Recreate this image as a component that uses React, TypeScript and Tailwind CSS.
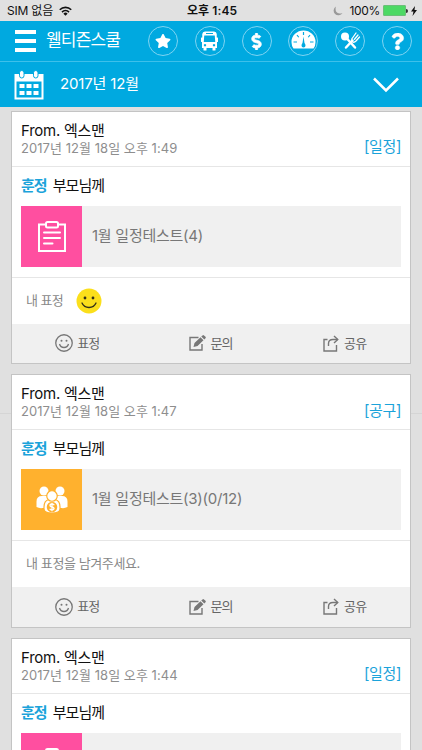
import type { ReactNode } from 'react';
import { FaDollarSign, FaQuestion, FaStar } from 'react-icons/fa';

type Post = {
  id: number;
  date: string;
  category: string;
  title: string;
  kind: 'schedule' | 'group';
  reacted: boolean;
};

const POSTS: Post[] = [
  { id: 1, date: '2017년 12월 18일 오후 1:49', category: '[일정]', title: '1월 일정테스트(4)', kind: 'schedule', reacted: true },
  { id: 2, date: '2017년 12월 18일 오후 1:47', category: '[공구]', title: '1월 일정테스트(3)(0/12)', kind: 'group', reacted: false },
  { id: 3, date: '2017년 12월 18일 오후 1:44', category: '[일정]', title: '', kind: 'schedule', reacted: false },
];

function WifiIcon() {
  return (
    <svg className="ml-1.5 h-[10px] w-[13px]" viewBox="0 0 26 20" fill="none" stroke="#111" strokeWidth="3.2">
      <path d="M1.500 7.500a16.500 16.500 0 0 1 23 0" />
      <path d="M6 12.200a10 10 0 0 1 14 0" />
      <path d="M13 19.500l-4.200-4.200a6 6 0 0 1 8.400 0z" fill="#111" stroke="none" />
    </svg>
  );
}

function BusIcon() {
  return (
    <svg className="h-[20px] w-[17px]" viewBox="0 0 34 40">
      <path
        fill="#fff"
        fillRule="evenodd"
        d="M8 1h18q5 0 5.500 5v7h1.500q1 0 1 1v7q0 1-1 1h-1v12h-3v4q0 1-1 1h-4q-1 0-1-1v-4H11v4q0 1-1 1H6q-1 0-1-1v-4H2V22H1q-1 0-1-1v-7q0-1 1-1h1.500V6Q3 1 8 1zM10 4v2h14V4zM6.500 9l-1 13h23l-1-13zM8 26a2.400 2.400 0 1 0 .01 0zM26 26a2.400 2.400 0 1 0 .01 0z"
      />
    </svg>
  );
}

function GaugeIcon() {
  return (
    <svg className="mb-[4px] h-[19px] w-[25px]" viewBox="0 0 50 38">
      <path fill="#fff" d="M5 37Q1 32 1 24A24 23 0 0 1 49 24Q49 32 45 37Z" />
      <g stroke="#00a9e0" strokeWidth="2.400" fill="none">
        <path d="M25 4v6M12 10l3.500 4.500M38 10l-3.500 4.500M5 24h7M45 24h-7" />
      </g>
      <path fill="#00a9e0" d="M25 13l2 13q2 2 2 5a4 4 0 0 1-8 0q0-3 2-5z" />
    </svg>
  );
}

function MealIcon() {
  return (
    <svg className="h-[20px] w-[21px]" viewBox="0 0 42 40">
      <g stroke="#fff" strokeLinecap="round" fill="none">
        <path strokeWidth="5" d="M12 13L30 33M12 33l13-14" />
        <path strokeWidth="2.600" d="M24 15q-2 4 1 6.500t7-1.500L39 12M25 14L32 4M29 16.500L36 8" />
      </g>
      <circle cx="10" cy="11" r="8" fill="#fff" />
    </svg>
  );
}

function CalendarIcon() {
  return (
    <svg className="h-[30px] w-[30px]" viewBox="0 0 60 60">
      <path fill="#fff" fillRule="evenodd" d="M1 8h58v51H1zM5 23v32h50V23z" />
      <g fill="#fff" stroke="#00a9e0" strokeWidth="2">
        <rect x="11" y="1" width="9" height="15" rx="4.500" />
        <rect x="39" y="1" width="9" height="15" rx="4.500" />
      </g>
      <path fill="#fff" d="M11 28h10v8H11zM25 28h10v8H25zM39 28h10v8H39zM11 42h10v8H11zM25 42h10v8H25zM39 42h10v8H39z" />
    </svg>
  );
}

function ClipboardIcon() {
  return (
    <svg className="h-[31px] w-[28px]" viewBox="0 0 56 62" fill="none" stroke="#fff" strokeWidth="4">
      <path d="M15 7H2v53h52V7H41" />
      <rect x="16" y="2" width="24" height="11" rx="3" />
      <path strokeLinecap="round" d="M12 23h32M12 34h32M12 45h17" />
    </svg>
  );
}

function GroupIcon() {
  return (
    <svg className="h-[27px] w-[32px]" viewBox="0 0 64 54">
      <g fill="#fff">
        <circle cx="16" cy="10" r="9" />
        <circle cx="48" cy="10" r="9" />
        <path d="M1 42V31Q1 20 12 20h40q11 0 11 11v11q-6 3-12 2H13q-6 1-12-2z" />
      </g>
      <g fill="#fff" stroke="#ffb12e" strokeWidth="2.400">
        <path d="M16 46V42q0-13 10-15h12q10 2 10 15v4q0 8-16 8t-16-8z" />
        <circle cx="32" cy="20" r="10.500" />
      </g>
      <circle cx="32" cy="42" r="10.500" fill="#ffb12e" />
      <path
        d="M36.500 38.500q-1-2.500-4.500-2.500-4 0-4 2.800 0 2.500 4 3.200t4 3.200q0 2.800-4 2.800-3.500 0-4.500-2.500M32 33.500v17"
        fill="none"
        stroke="#fff"
        strokeWidth="2.800"
      />
    </svg>
  );
}

function YellowSmile() {
  return (
    <svg className="ml-[13px] h-[26px] w-[26px]" viewBox="0 0 52 52">
      <circle cx="26" cy="26" r="25" fill="#fbdf1b" />
      <circle cx="18" cy="20" r="2.800" fill="#333018" />
      <circle cx="34" cy="20" r="2.800" fill="#333018" />
      <path d="M12 30q4 9 14 9t14-9" fill="none" stroke="#333018" strokeWidth="2.600" strokeLinecap="round" />
    </svg>
  );
}

function SmileIcon() {
  return (
    <svg className="h-[18px] w-[18px]" viewBox="0 0 36 36" fill="none" stroke="#777" strokeWidth="2.600">
      <circle cx="18" cy="18" r="16.500" />
      <circle cx="13" cy="13.500" r="2" fill="#777" stroke="none" />
      <circle cx="23" cy="13.500" r="2" fill="#777" stroke="none" />
      <path d="M9 20q2 7 9 7t9-7" />
    </svg>
  );
}

function WriteIcon() {
  return (
    <svg className="h-[16px] w-[17px]" viewBox="0 0 34 32">
      <path d="M19 5H2v25h24V18" fill="none" stroke="#777" strokeWidth="2.800" />
      <path d="M9 24l2-8L23 4.500l6 6L17 22zM24.500 3L27 .8q1.500-1.300 3 0L33 3.600q1.300 1.400 0 2.800L30.600 9z" fill="#777" />
    </svg>
  );
}

function ShareIcon() {
  return (
    <svg className="h-[17px] w-[16px]" viewBox="0 0 32 34" fill="none" stroke="#777" strokeWidth="2.800">
      <path d="M9 9H2v23h25V20" />
      <path d="M11 22V17q0-8 9-8h9" />
      <path d="M22 2l7.500 7-7.500 7" />
    </svg>
  );
}

function RoundButton({ label, children }: { label: string; children: ReactNode }) {
  return (
    <button
      aria-label={label}
      className="flex h-[30px] w-[30px] shrink-0 items-center justify-center rounded-full border border-[#7fd4f2] text-white"
    >
      {children}
    </button>
  );
}

function StatusBar() {
  return (
    <div className="flex h-[21px] shrink-0 items-center bg-[#e1e1e1] pl-[7px] pr-[5px] text-[12px] text-[#111]">
      <div className="flex flex-1 items-center">
        <span className="tracking-[-0.2px]">SIM 없음</span>
        <WifiIcon />
      </div>
      <span className="font-semibold tracking-[0.1px]">오후 1:45</span>
      <div className="flex flex-1 items-center justify-end">
        <svg className="mr-[6px] h-[10px] w-[10px]" viewBox="0 0 20 20">
          <path d="M6 1a9.500 9.500 0 1 0 13 13Q10 17 6.500 11.500 4 7 6 1z" fill="#999" />
        </svg>
        <span className="tracking-[-0.3px]">100%</span>
        <div className="ml-[3px] h-[11px] w-[23px] rounded-[1px] border border-[#6bbf78] bg-[#4cd964]" />
        <div className="h-[4px] w-[2px] rounded-r-full bg-[#333]" />
        <svg className="ml-[3px] h-[10px] w-[6px]" viewBox="0 0 12 20">
          <path d="M8 0L0 11h5l-2 9 9-12H7z" fill="#111" />
        </svg>
      </div>
    </div>
  );
}

function PostCard({ post }: { post: Post }) {
  return (
    <article className="relative h-[253.500px] shrink-0 border border-[#c4c4c4] bg-white">
      <header className="flex h-[55px] justify-between border-b border-[#e6e6e6] px-[9px]">
        <div className="pt-[10px]">
          <p className="text-[15px] leading-[18px] tracking-[-0.25px] text-[#111]">From. 엑스맨</p>
          <p className="text-[13px] leading-[17px] tracking-[0.05px] text-[#8e8e8e]">{post.date}</p>
        </div>
        <span className="pt-[25.500px] text-[15px] leading-[20px] tracking-[-0.4px] text-[#1ba3da]">{post.category}</span>
      </header>
      <div className="h-[111px] border-b border-[#e6e6e6] px-[9px]">
        <p className="flex h-[39px] items-center gap-[6px] text-[15px] tracking-[-0.95px]">
          <span className="font-bold text-[#1ba3da]">훈정</span>
          <span className="text-[#111]">부모님께</span>
        </p>
        <div className="flex h-[61px] items-center bg-[#f0f0f0]">
          <div
            className={
              post.kind === 'schedule'
                ? 'flex h-[61px] w-[61px] items-center justify-center bg-[#ff4fa0]'
                : 'flex h-[61px] w-[61px] items-center justify-center bg-[#ffb12e]'
            }
          >
            {post.kind === 'schedule' ? <ClipboardIcon /> : <GroupIcon />}
          </div>
          <span className="ml-[10px] text-[15px] tracking-[-0.25px] text-[#777]">{post.title}</span>
        </div>
      </div>
      {post.reacted ? (
        <div className="flex h-[46px] items-center pl-[14px] text-[13px] tracking-[-0.6px] text-[#888]">
          내 표정
          <YellowSmile />
        </div>
      ) : (
        <div className="flex h-[46px] items-center pl-[14px] text-[13px] tracking-[-0.4px] text-[#888]">
          {post.title && '내 표정을 남겨주세요.'}
        </div>
      )}
      {post.title && (
        <footer className="grid h-[39.500px] grid-cols-3 bg-[#f0f0f0] text-[13px] tracking-[-0.9px] text-[#666]">
          <button className="flex items-center justify-center gap-[4px] pr-[2px]">
            <SmileIcon />
            표정
          </button>
          <button className="flex items-center justify-center gap-[4px]">
            <WriteIcon />
            문의
          </button>
          <button className="flex items-center justify-center gap-[5px] pl-[2px]">
            <ShareIcon />
            공유
          </button>
        </footer>
      )}
    </article>
  );
}

export default function App() {
  return (
    <div className="flex h-[750px] w-[422px] flex-col overflow-hidden whitespace-nowrap bg-[#e0e0e0] font-['Inter','Noto_Sans_CJK_KR',sans-serif]">
      <StatusBar />

      {/* App bar */}
      <div className="flex h-[41px] shrink-0 items-center border-b border-[#3dc0ea] bg-[#00a9e0] pl-[15px] pr-[10px] text-white">
        <button aria-label="메뉴" className="flex w-[21px] flex-col gap-[5px]">
          <span className="h-[4px] bg-white" />
          <span className="h-[4px] bg-white" />
          <span className="h-[4px] bg-white" />
        </button>
        <h1 className="ml-[10px] text-[17px] tracking-[-0.8px]">웰티즌스쿨</h1>
        <nav className="ml-auto flex gap-[16.800px]">
          <RoundButton label="즐겨찾기">
            <FaStar size={16} />
          </RoundButton>
          <RoundButton label="버스">
            <BusIcon />
          </RoundButton>
          <RoundButton label="결제">
            <FaDollarSign size={17} stroke="#fff" strokeWidth={24} />
          </RoundButton>
          <RoundButton label="현황">
            <GaugeIcon />
          </RoundButton>
          <RoundButton label="식단">
            <MealIcon />
          </RoundButton>
          <RoundButton label="도움말">
            <FaQuestion size={17} stroke="#fff" strokeWidth={12} />
          </RoundButton>
        </nav>
      </div>

      {/* Month selector */}
      <div className="flex h-[45px] shrink-0 items-center bg-[#00a9e0] pl-[14px] pr-[23px] text-white">
        <CalendarIcon />
        <span className="ml-[16px] text-[15px] tracking-[-0.15px]">2017년 12월</span>
        <svg className="ml-auto h-[16px] w-[26px]" viewBox="0 0 52 32" fill="none" stroke="#fff" strokeWidth="5">
          <path d="M2 3l24 24L50 3" />
        </svg>
      </div>

      <main className="relative flex flex-col gap-[10px] px-[11px] pt-[3.500px]">
        {/* Page seam behind the cards */}
        <div className="absolute inset-x-0 top-[306px] h-px bg-[#d5d5d5]" />
        {POSTS.map((post) => (
          <PostCard key={post.id} post={post} />
        ))}
      </main>
    </div>
  );
}
